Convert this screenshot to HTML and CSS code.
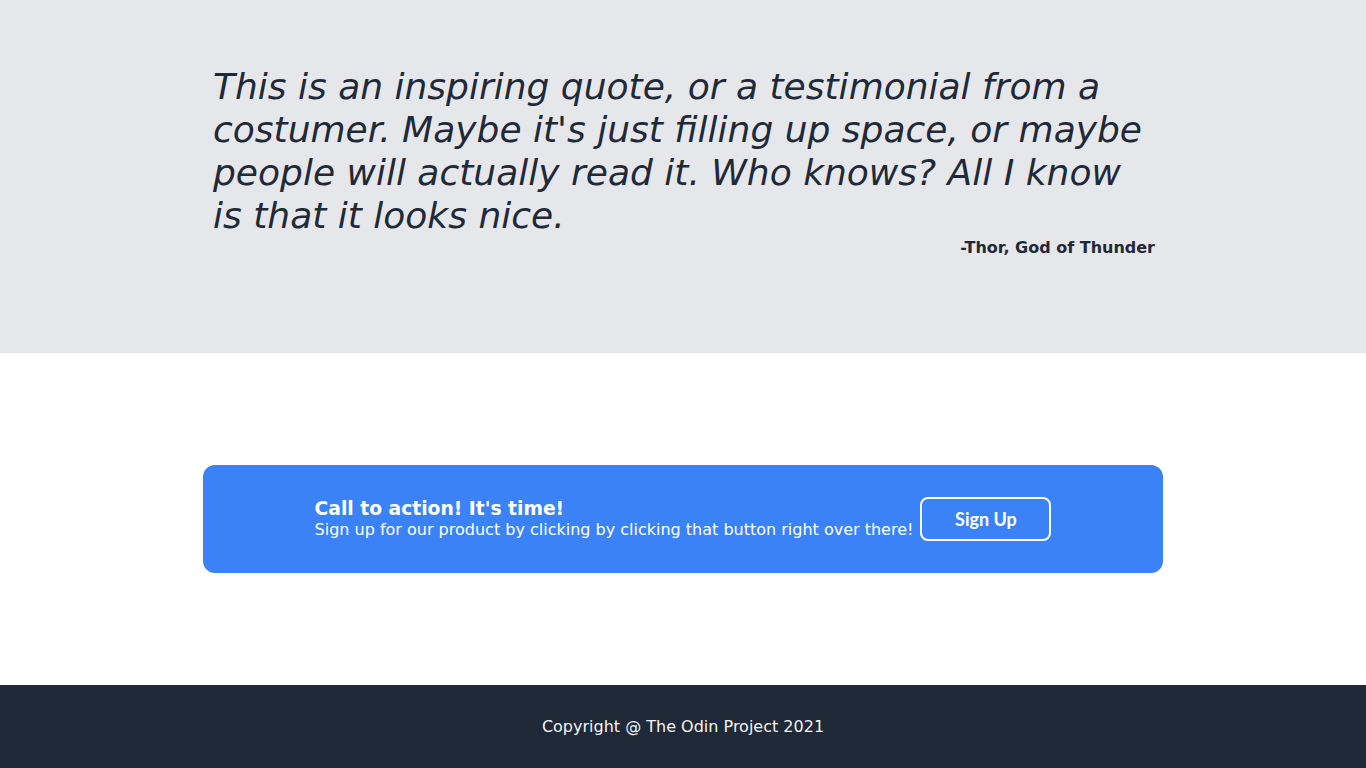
FILE: index.html
```html
<!DOCTYPE html>
<html lang="en">
<head>
<meta charset="utf-8">
<title>Landing</title>
<link rel="stylesheet" href="styles.css">
</head>
<body>
  <section class="quote-section">
    <div class="container quote-wrap">
      <p class="quote">This is an inspiring quote, or a testimonial from a costumer. Maybe it's just filling up space, or maybe people will actually read it. Who knows? All I know is that it looks nice.</p>
      <p class="author">-Thor, God of Thunder</p>
    </div>
  </section>
  <section class="cta-section">
    <div class="container cta">
      <div class="cta-text">
        <div class="cta-title">Call to action! It's time!</div>
        <div class="cta-sub">Sign up for our product by clicking by clicking that button right over there!</div>
      </div>
      <button class="cta-btn">Sign Up</button>
    </div>
  </section>
  <footer class="footer">Copyright @ The Odin Project 2021</footer>
</body>
</html>
```

FILE: styles.css
```css
* { box-sizing: border-box; }
html, body { margin: 0; padding: 0; }
body {
  font-family: "DejaVu Sans", sans-serif;
  color: #1f2937;
  background: #ffffff;
}
.container {
  width: 960px;
  margin: 0 auto;
}
.quote-section {
  background: #e5e7eb;
  height: 353px;
  padding-top: 65px;
}
.quote-wrap {
  padding: 0 8px 0 10px;
}
.quote {
  margin: 0;
  font-size: 36px;
  line-height: 43px;
  font-style: italic;
  font-weight: 300;
}
.author {
  margin: 0;
  text-align: right;
  font-weight: 700;
  font-size: 16px;
  line-height: 20px;
  margin-top: 1px;
}
.cta-section {
  padding: 112px 0;
}
.cta {
  background: #3b82f6;
  border-radius: 12px;
  height: 108px;
  display: flex;
  align-items: center;
  justify-content: center;
  gap: 7px;
  color: #ffffff;
}
.cta-title {
  font-size: 18.72px;
  font-weight: 700;
  line-height: 22px;
}
.cta-sub {
  font-size: 16px;
  line-height: 20px;
}
.cta-btn {
  font-family: "Lato", "Open Sans", sans-serif;
  font-weight: 700;
  font-size: 18px;
  color: #ffffff;
  background: transparent;
  border: 2px solid #ffffff;
  border-radius: 8px;
  width: 131px;
  height: 44px;
  padding: 0;
}
.footer {
  background: #1f2937;
  color: #f3f4f6;
  height: 83px;
  display: flex;
  align-items: center;
  justify-content: center;
  font-size: 16px;
}
```
